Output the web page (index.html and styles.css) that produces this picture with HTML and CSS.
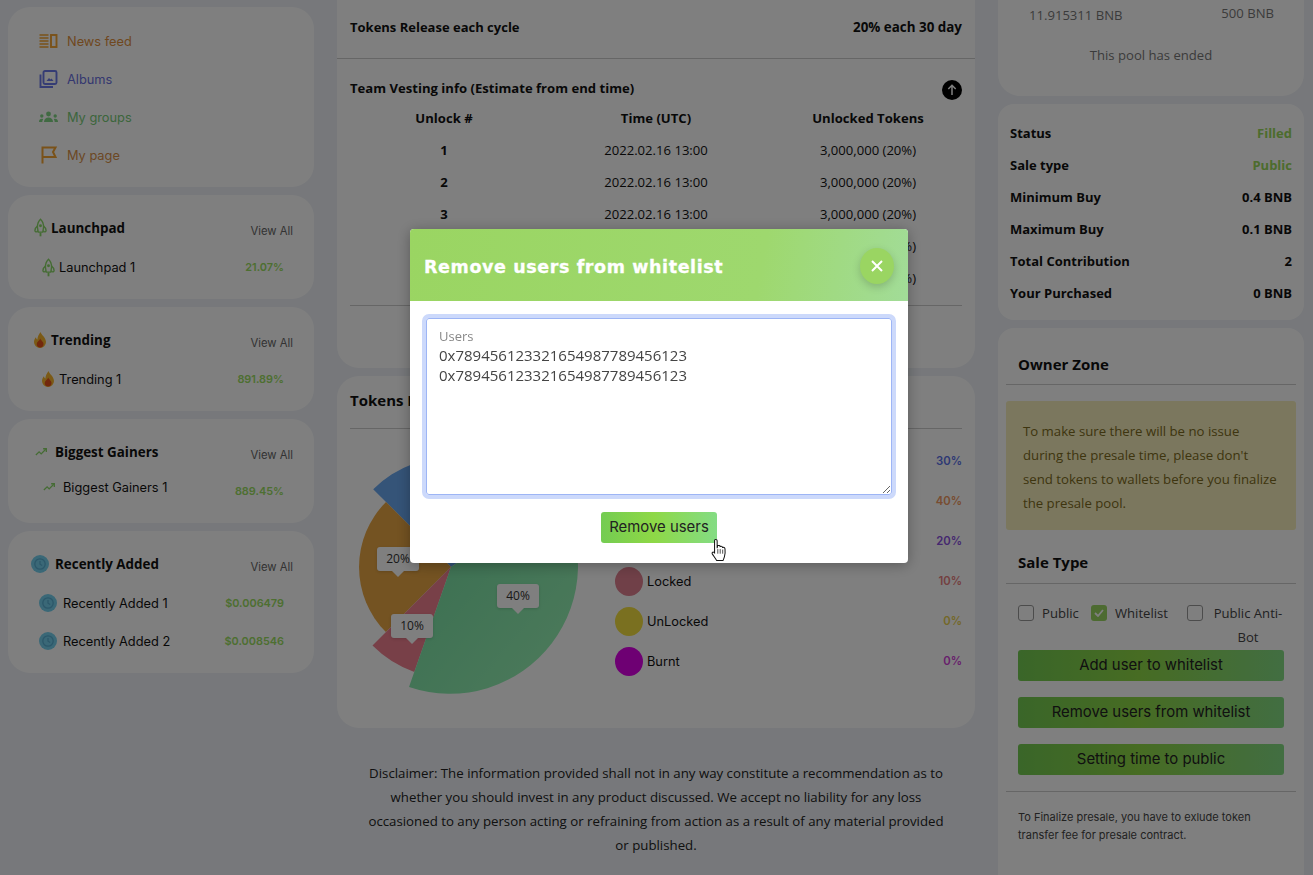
FILE: index.html
```html
<!DOCTYPE html>
<html>
<head>
<meta charset="UTF-8">
<title>Presale pool</title>
<link rel="stylesheet" href="styles.css">
</head>
<body>

<svg class="defs" width="0" height="0">
	<defs>
		<linearGradient id="greenSlice" x1="0" y1="0" x2="1" y2="1">
			<stop offset="0" stop-color="#70dca0"/>
			<stop offset="1" stop-color="#9cf6b8"/>
		</linearGradient>
	</defs>
	<symbol id="rocket" viewBox="0 0 14 20">
		<path d="M7 1C4.800 3 3.700 6 3.700 9.500L4.500 15h5l.8-5.500C10.300 6 9.200 3 7 1z" fill="none" stroke="#8ad868" stroke-width="1.500"/>
		<path d="M3.700 8.500C2 9.800 1 11.500 1 13.200c0 1.300 1 1.800 2 1.200l1.400-.9M10.300 8.500c1.700 1.300 2.700 3 2.700 4.700 0 1.300-1 1.800-2 1.200l-1.400-.9" fill="none" stroke="#8ad868" stroke-width="1.500"/>
		<circle cx="7" cy="8" r="1.600" fill="#8ad868"/>
		<path d="M7 15.500V19.500" stroke="#8ad868" stroke-width="2"/>
	</symbol>
	<symbol id="flame" viewBox="0 0 12 16">
		<path d="M6.500 0C7 2.800 12 5.500 12 10a6 6 0 0 1-12 0c0-2.300 1-3.800 2-4.800.2 1.400.7 2.100 1.400 2.300C3.400 4.800 5 2 6.500 0z" fill="#f7b52c"/>
		<path d="M6.300 6.500C6.600 8.300 9.500 9.500 9.500 12a3.400 3.400 0 0 1-6.800 0c0-2.200 2.800-3.300 3.600-5.500z" fill="#e5501a"/>
	</symbol>
	<symbol id="trend" viewBox="0 0 14 10">
		<path d="M1 8.500 4.800 4.800l2.400 2.400L12.500 1.800" fill="none" stroke="#8ad868" stroke-width="1.500"/>
		<path d="M9.500 1.200h3.700v3.700" fill="none" stroke="#8ad868" stroke-width="1.500"/>
	</symbol>
	<symbol id="clock" viewBox="0 0 18 18">
		<circle cx="9" cy="9" r="9" fill="#74d0ee"/>
		<circle cx="9" cy="9" r="5.200" fill="none" stroke="#58aed2" stroke-width="1.300"/>
		<path d="M9 6v3.200l2.200 1.300" fill="none" stroke="#58aed2" stroke-width="1.200"/>
	</symbol>
</svg>

<div class="page">

	<aside class="col-left">
		<div class="card menu">
			<a class="menu-item orange">
				<svg width="18" height="14" viewBox="0 0 18 14"><path d="M0 1h9M0 4h9M0 7h9M0 10h9M0 13h9" stroke="#f4a432" stroke-width="1.600"/><rect x="11.500" y="1" width="5.500" height="12" fill="none" stroke="#f4a432" stroke-width="1.900"/></svg>
				News feed
			</a>
			<a class="menu-item blue">
				<svg width="18" height="18" viewBox="0 0 18 18"><path d="M1 4.500V17h12.500" fill="none" stroke="#6a78e8" stroke-width="1.900"/><rect x="4" y="1" width="13" height="13" rx="1.500" fill="none" stroke="#6a78e8" stroke-width="1.900"/><path d="M7 11l2.500-3 1.500 1.500 1-1 2 2.500z" fill="#6a78e8"/></svg>
				Albums
			</a>
			<a class="menu-item green">
				<svg width="19" height="12" viewBox="0 0 19 12"><circle cx="9.500" cy="3" r="2.400" fill="#80d484"/><path d="M5 11c0-3 2-4.500 4.500-4.500S14 8 14 11z" fill="#80d484"/><circle cx="2.800" cy="5" r="1.700" fill="#80d484"/><path d="M0 11c0-2.200 1.200-3.200 2.800-3.200.6 0 1 .1 1.400.4-.6.800-.9 1.700-.9 2.800z" fill="#80d484"/><circle cx="16.200" cy="5" r="1.700" fill="#80d484"/><path d="M19 11c0-2.200-1.200-3.200-2.800-3.200-.6 0-1 .1-1.400.4.600.800.900 1.700.900 2.800z" fill="#80d484"/></svg>
				My groups
			</a>
			<a class="menu-item brown">
				<svg width="18" height="18" viewBox="0 0 18 18"><path d="M3 17.500V1.500h13l-2.500 4.500 2.500 5H3" fill="none" stroke="#f4a432" stroke-width="2"/></svg>
				My page
			</a>
		</div>

		<div class="card side-list">
			<div class="side-head">
				<h3><svg class="ico-rocket"><use href="#rocket"/></svg>Launchpad</h3>
				<a>View All</a>
			</div>
			<div class="side-row">
				<span><svg class="ico-rocket"><use href="#rocket"/></svg>Launchpad 1</span>
				<b>21.07%</b>
			</div>
		</div>

		<div class="card side-list">
			<div class="side-head">
				<h3><svg class="ico-flame"><use href="#flame"/></svg>Trending</h3>
				<a>View All</a>
			</div>
			<div class="side-row">
				<span><svg class="ico-flame"><use href="#flame"/></svg>Trending 1</span>
				<b>891.89%</b>
			</div>
		</div>

		<div class="card side-list">
			<div class="side-head">
				<h3><svg class="ico-trend"><use href="#trend"/></svg>Biggest Gainers</h3>
				<a>View All</a>
			</div>
			<div class="side-row gain">
				<span><svg class="ico-trend"><use href="#trend"/></svg>Biggest Gainers 1</span>
				<b>889.45%</b>
			</div>
		</div>

		<div class="card side-list">
			<div class="side-head">
				<h3><svg class="ico-clock"><use href="#clock"/></svg>Recently Added</h3>
				<a>View All</a>
			</div>
			<div class="side-row">
				<span><svg class="ico-clock"><use href="#clock"/></svg>Recently Added 1</span>
				<b>$0.006479</b>
			</div>
			<div class="side-row">
				<span><svg class="ico-clock"><use href="#clock"/></svg>Recently Added 2</span>
				<b>$0.008546</b>
			</div>
		</div>
	</aside>

	<main class="col-mid">
		<section class="card vesting">
			<div class="release">
				<span>Tokens Release each cycle</span>
				<span class="release-val">20% each 30 day</span>
			</div>
			<div class="team">
				<div class="team-head">
					<span>Team Vesting info (Estimate from end time)</span>
					<svg width="20" height="20" viewBox="0 0 20 20"><circle cx="10" cy="10" r="10" fill="#000"/><path d="M10 15V5.500M6.300 9 10 5.300 13.700 9" fill="none" stroke="#fff" stroke-width="1.500"/></svg>
				</div>
				<div class="vest-table">
					<b>Unlock #</b><b>Time (UTC)</b><b>Unlocked Tokens</b>
					<b>1</b><span>2022.02.16 13:00</span><span>3,000,000 (20%)</span>
					<b>2</b><span>2022.02.16 13:00</span><span>3,000,000 (20%)</span>
					<b>3</b><span>2022.02.16 13:00</span><span>3,000,000 (20%)</span>
					<b></b><span></span><span>3,000,000 (20%)</span>
					<b></b><span></span><span>3,000,000 (20%)</span>
				</div>
				<div class="rule"></div>
			</div>
		</section>

		<section class="card tokens">
			<h2>Tokens Info</h2>
			<div class="tokens-body">
				<div class="chart">
					<svg width="250" height="270" viewBox="0 0 250 270">
						<path d="M101 127 L23.200 49.200 A110 110 0 0 1 191 64 Z" fill="#6aa8f0"/>
						<path d="M101 127 L35.900 192.100 A92 92 0 0 1 36 62 Z" fill="#e8a644"/>
						<path d="M101 127 L64.300 231.900 A111 111 0 0 1 22.500 205.500 Z" fill="#f08090"/>
						<path d="M101 127 L206 54 A128 128 0 0 1 59 247 Z" fill="url(#greenSlice)"/>
					</svg>
					<span class="tip tip-20">20%</span>
					<span class="tip tip-10">10%</span>
					<span class="tip tip-40">40%</span>
				</div>
				<ul class="legend">
					<li><em class="t-blue">30%</em></li>
					<li><em class="t-orange">40%</em></li>
					<li><em class="t-purple">20%</em></li>
					<li><i class="dot c-red"></i>Locked<em class="t-red">10%</em></li>
					<li><i class="dot c-yellow"></i>UnLocked<em class="t-yellow">0%</em></li>
					<li><i class="dot c-magenta"></i>Burnt<em class="t-magenta">0%</em></li>
				</ul>
			</div>
		</section>

		<p class="disclaimer">Disclaimer: The information provided shall not in any way constitute a recommendation as to whether you should invest in any product discussed. We accept no liability for any loss occasioned to any person acting or refraining from action as a result of any material provided or published.</p>
	</main>

	<aside class="col-right">
		<section class="card pool">
			<div class="pool-nums">
				<span class="raised">11.915311 BNB</span>
				<span class="cap">500 BNB</span>
			</div>
			<p>This pool has ended</p>
		</section>

		<section class="card stats">
			<div><span>Status</span><span class="ok">Filled</span></div>
			<div><span>Sale type</span><span class="ok">Public</span></div>
			<div><span>Minimum Buy</span><span>0.4 BNB</span></div>
			<div><span>Maximum Buy</span><span>0.1 BNB</span></div>
			<div><span>Total Contribution</span><span>2</span></div>
			<div><span>Your Purchased</span><span>0 BNB</span></div>
		</section>

		<section class="card owner">
			<h3 class="owner-title">Owner Zone</h3>
			<div class="warn">To make sure there will be no issue<br>during the presale time, please don't<br>send tokens to wallets before you finalize<br>the presale pool.</div>
			<h3 class="owner-title sale">Sale Type</h3>
			<div class="checks">
				<label class="check chk-public"><i class="box"></i>Public</label>
				<label class="check chk-white"><i class="box on"><svg width="10" height="8" viewBox="0 0 10 8"><path d="M1 4l3 3 5-6" fill="none" stroke="#fff" stroke-width="1.800"/></svg></i>Whitelist</label>
				<label class="check chk-anti"><i class="box"></i><span>Public Anti-Bot</span></label>
			</div>
			<div class="owner-btns">
				<button class="grad-btn">Add user to whitelist</button>
				<button class="grad-btn">Remove users from whitelist</button>
				<button class="grad-btn">Setting time to public</button>
			</div>
			<p class="finalize">To Finalize presale, you have to exlude token transfer fee for presale contract.</p>
		</section>
	</aside>
</div>

<div class="overlay">
	<div class="modal">
		<div class="modal-head">
			<h4>Remove users from whitelist</h4>
			<button class="close"><svg width="12" height="12" viewBox="0 0 12 12"><path d="M1 1l10 10M11 1 1 11" stroke="#fff" stroke-width="2"/></svg></button>
		</div>
		<div class="modal-body">
			<div class="field">
				<label for="users">Users</label>
				<textarea id="users">0x789456123321654987789456123
0x789456123321654987789456123</textarea>
			</div>
			<button class="grad-btn submit">Remove users</button>
			<svg class="hand" width="18" height="24" viewBox="0 0 17 26"><path d="M5 1.500c.9 0 1.500.7 1.500 1.600V11l.5-2.800c1.500-.5 2.500 0 2.700 1 1.200-.6 2.400-.1 2.600 1 1.300-.4 2.500.2 2.700 1.500.3 3 .2 6-.6 8.500-.5 2-1 3-1.600 4.300H6c-1-2-3-4.500-4.800-7.300-.7-1.200.5-2.500 1.800-1.700l.7.6V3.100c0-.9.500-1.600 1.300-1.600z" fill="#fff" stroke="#111" stroke-width="1.100"/><path d="M7.200 12v5M9.800 12v5M12.500 12.500V17" stroke="#111" stroke-width=".8"/></svg>
		</div>
	</div>
</div>

</body>
</html>
```

FILE: styles.css
```css
* {
	box-sizing: border-box;
}

html, body {
	margin: 0;
	height: 875px;
	overflow: hidden;
}

body {
	background: #eef1f6;
	color: #111;
	font-family: "Open Sans", "Noto Sans", sans-serif;
	font-size: 14px;
}

.defs {
	position: absolute;
}

.page {
	display: grid;
	grid-template-columns: 306px 638px 306px;
	column-gap: 23px;
	padding-left: 8px;
	height: 875px;
	overflow: hidden;
}

.card {
	background: #fff;
	border-radius: 22px;
}

/* left column */
.col-left {
	display: flex;
	flex-direction: column;
	gap: 8px;
	padding-top: 7px;
	font-family: Inter, "Open Sans", sans-serif;
}

.menu {
	height: 180px;
	padding: 15px 0 0 31px;
}

.menu-item {
	display: flex;
	align-items: center;
	height: 38px;
	font-size: 12.800px;
}

.menu-item svg {
	width: 19px;
	margin-right: 9px;
	flex: none;
}

.orange { color: #e09040; }
.blue { color: #6a70e0; }
.green { color: #78cc78; }
.brown { color: #d89048; }

.side-list {
	padding: 20px 21px 0 26px;
	height: 104px;
}

.side-list:last-child {
	height: 142px;
}

.side-head {
	display: flex;
	justify-content: space-between;
	align-items: center;
	height: 28px;
	margin-bottom: 10px;
}

.side-head h3 {
	display: flex;
	align-items: center;
	margin: -3px 0 0;
	font-family: "Open Sans", sans-serif;
	font-size: 13.400px;
	font-weight: 700;
}

.side-head a {
	font-size: 11.300px;
	color: #666;
	margin-top: 4px;
}

.side-row {
	display: flex;
	justify-content: space-between;
	align-items: center;
	height: 38px;
	margin: -5px 0 0 8px;
	padding-right: 9px;
	font-size: 12.800px;
}

.side-row + .side-row {
	margin-top: 0;
}

.side-row span {
	display: flex;
	align-items: center;
}

.side-row b {
	font-weight: 600;
	font-size: 10.900px;
	color: #9ade62;
}

.gain span {
	margin-top: -8px;
}

.ico-rocket {
	width: 13px;
	height: 19px;
	margin-right: 4px;
}

.ico-flame {
	width: 12px;
	height: 16px;
	margin-right: 5px;
}

.ico-trend {
	width: 12px;
	height: 10px;
	margin: 0 8px 0 1px;
}

.ico-clock {
	width: 18px;
	height: 18px;
	margin: 0 6px 0 -3px;
}

/* middle column */
.col-mid {
	display: flex;
	flex-direction: column;
	gap: 8px;
}

.vesting {
	height: 368px;
	border-radius: 0 0 22px 22px;
}

.release {
	display: flex;
	justify-content: space-between;
	height: 59px;
	padding: 18px 13px 0;
	border-bottom: 1px solid #ccc;
	font-size: 13px;
	font-weight: 700;
}

.release-val {
	font-size: 13.400px;
}

.team {
	padding: 0 13px;
}

.team-head {
	display: flex;
	justify-content: space-between;
	align-items: center;
	padding-top: 19px;
	height: 43px;
	font-size: 13.100px;
	font-weight: 700;
}

.team-head span {
	margin-top: -4px;
}

.vest-table {
	display: grid;
	grid-template-columns: 188px 1fr 188px;
	grid-auto-rows: 32px;
	line-height: 32px;
	text-align: center;
	font-size: 13.100px;
}

.rule {
	margin-top: 11px;
	border-top: 1px solid #ccc;
}

.tokens {
	height: 352px;
	padding: 0 13px;
}

.tokens h2 {
	margin: 0;
	height: 53px;
	padding-top: 13px;
	border-bottom: 1px solid #ccc;
	font-size: 15px;
	line-height: 22px;
	font-weight: 700;
}

.tokens-body {
	display: flex;
	padding-top: 11px;
}

.chart {
	position: relative;
	width: 250px;
	height: 270px;
	margin-right: 15px;
	flex: none;
}

.chart svg {
	display: block;
}

.tip {
	position: absolute;
	width: 42px;
	height: 24px;
	border-radius: 3px;
	background: #fff;
	box-shadow: 0 1px 3px rgba(0, 0, 0, .15);
	font-size: 12px;
	line-height: 24px;
	text-align: center;
	color: #333;
}

.tip::after {
	content: "";
	position: absolute;
	left: 15px;
	top: 24px;
	border: 6px solid transparent;
	border-top-color: #fff;
	border-bottom: 0;
}

.tip-20 { left: 27px; top: 107px; }
.tip-10 { left: 41px; top: 174px; }
.tip-40 { left: 147px; top: 144px; }

.legend {
	flex: 1;
	list-style: none;
	margin: 0;
	padding: 1px 0 0;
	font-family: Inter, "Open Sans", sans-serif;
	font-size: 12.800px;
}

.legend li {
	display: flex;
	align-items: center;
	height: 40px;
}

.legend em {
	margin-left: auto;
	font-style: normal;
	font-weight: 600;
	font-size: 11.300px;
}

.dot {
	width: 28px;
	height: 29px;
	margin-right: 4px;
	border-radius: 50%;
}

.c-red { background: #e08090; }
.c-yellow { background: #f4e040; }
.c-magenta { background: #dc00e6; }
.t-blue { color: #5a70e8; }
.t-orange { color: #f09860; }
.t-purple { color: #8a50e0; }
.t-red { color: #e88080; }
.t-yellow { color: #e8d050; }
.t-magenta { color: #d040d8; }

.disclaimer {
	margin: 25px 27px 0;
	line-height: 24px;
	font-size: 13.250px;
	text-align: center;
	color: #222;
}

/* right column */
.col-right {
	display: flex;
	flex-direction: column;
	gap: 8px;
}

.pool {
	height: 96px;
	border-radius: 0 0 22px 22px;
	font-size: 13.100px;
	color: #777;
}

.pool-nums {
	display: flex;
	justify-content: space-between;
	padding: 4px 30px 0 31px;
}

.raised {
	padding-top: 2px;
}

.pool p {
	margin: 22px 0 0;
	text-align: center;
}

.stats {
	height: 216px;
	padding: 13px 12px;
	font-size: 13px;
	font-weight: 700;
	border-radius: 16px;
}

.stats div {
	display: flex;
	justify-content: space-between;
	line-height: 32px;
}

.ok {
	color: #98d85a;
}

.owner {
	height: 560px;
	padding: 0 8px;
	border-radius: 16px 16px 0 0;
}

.owner-title {
	margin: 0;
	height: 57px;
	padding: 25px 12px 0;
	border-bottom: 1px solid #ccc;
	font-size: 15px;
	line-height: 22px;
	font-weight: 700;
}

.warn {
	margin-top: 16px;
	padding: 18px 17px 15px;
	border-radius: 3px;
	background: #f6efbc;
	color: #7d6a20;
	font-size: 13.200px;
	line-height: 24px;
}

.owner-title.sale {
	height: 54px;
	padding-top: 21px;
}

.checks {
	display: flex;
	padding: 17px 0 0 12px;
	height: 66px;
	line-height: 24px;
	font-size: 13.100px;
	color: #444;
}

.check {
	display: flex;
	align-items: flex-start;
}

.chk-public { width: 73px; }
.chk-white { width: 96px; }
.chk-anti { width: 97px; }

.box {
	flex: none;
	display: flex;
	align-items: center;
	justify-content: center;
	width: 16px;
	height: 16px;
	margin: 4px 8px 0 0;
	border: 1px solid #999;
	border-radius: 3px;
	background: #fff;
}

.box.on {
	border: 0;
	background: #9ad662;
}

.chk-anti .box {
	margin-right: 9px;
}

.chk-anti span {
	text-align: center;
}

.owner-btns {
	display: flex;
	flex-direction: column;
	gap: 16px;
	padding: 0 12px 16px;
	border-bottom: 1px solid #ccc;
}

.grad-btn {
	height: 31px;
	padding: 0 0 2px;
	border: 0;
	border-radius: 3px;
	background: linear-gradient(90deg, #74cc52 0%, #8ed846 45%, #84dc84 100%);
	color: #222;
	font-family: Inter, "Open Sans", sans-serif;
	font-size: 14.900px;
}

.finalize {
	margin: 16px 12px 0;
	font-family: Inter, "Open Sans", sans-serif;
	font-size: 11px;
	line-height: 18px;
	color: #444;
}

/* modal */
.overlay {
	position: fixed;
	top: 0;
	left: 0;
	width: 100%;
	height: 100%;
	padding: 229px 0 0 410px;
	background: rgba(0, 0, 0, .5);
}

.modal {
	width: 498px;
	height: 334px;
	border-radius: 4px;
	background: #fff;
	box-shadow: 0 2px 14px rgba(0, 0, 0, .3);
	overflow: hidden;
}

.modal-head {
	display: flex;
	justify-content: space-between;
	align-items: center;
	height: 72px;
	padding: 0 14px;
	background: linear-gradient(100deg, #9ad562 0%, #9ed86e 70%, #a2dc98 100%);
}

.modal-head h4 {
	margin: 4px 0 0;
	font-family: "DejaVu Sans", sans-serif;
	font-size: 17.500px;
	font-weight: 700;
	letter-spacing: .6px;
	-webkit-text-stroke: .3px #fff;
	color: #fff;
}

.close {
	display: flex;
	align-items: center;
	justify-content: center;
	width: 34px;
	height: 36px;
	margin-top: 2px;
	padding: 0;
	border: 0;
	border-radius: 50%;
	background: #9ad562;
	box-shadow: 0 3px 8px rgba(0, 0, 0, .18);
}

.modal-body {
	position: relative;
	padding: 13px 12px 0;
	text-align: center;
}

.field {
	position: relative;
	height: 185px;
	border-radius: 7px;
	border: 4px solid #ccd9fb;
}

.field label {
	position: absolute;
	left: 13px;
	top: 9px;
	font-size: 13px;
	color: #888;
}

.field textarea {
	display: block;
	width: 100%;
	height: 177px;
	padding: 26px 12px 0;
	border: 1px solid #9db5f5;
	border-radius: 3px;
	outline: none;
	font-family: "Open Sans", sans-serif;
	font-size: 15px;
	line-height: 20px;
	color: #444;
}

.submit {
	display: block;
	width: 116px;
	margin: 13px auto 0;
}

.hand {
	position: absolute;
	left: 300px;
	top: 237px;
}
```
